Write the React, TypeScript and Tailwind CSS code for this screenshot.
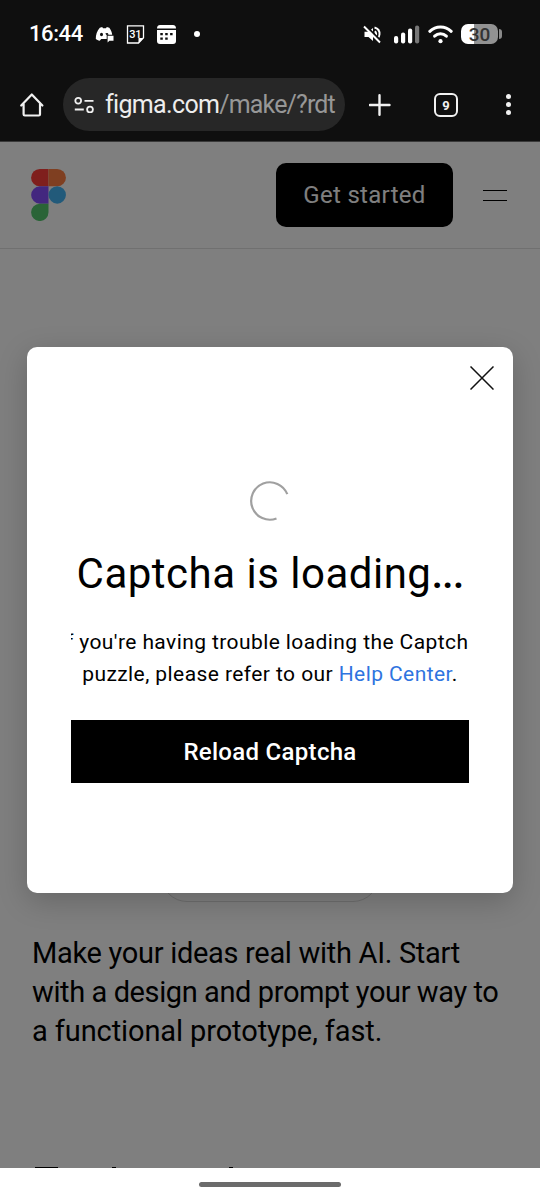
import React from 'react';

const StatusBar = () => {
  return (
    <div className="flex h-[70px] items-center pr-[38px] pb-[2px] pl-[29px] text-white">
      <span className="w-[66px] text-[22px] leading-none font-medium tracking-[-0.4px]">16:44</span>
      <svg className="h-5 w-[19px]" viewBox="0 0 19 20" fill="currentColor">
        <path d="M4.800 3.800 7.200 3 8 4.200h3L11.800 3l2.500.8c1.700 2.300 2.700 4.600 2.900 7h-5.500v4.300l-2.300-.2H6.200l-1.400 1.800C3 16.400 1.800 15.800.8 15c-.1-4 1.200-8 4-11.200Z" />
        <ellipse cx="6.500" cy="10.500" rx="1.500" ry="1.700" fill="#0f0f0f" />
        <path d="M10.300 9.500c1.500-1.100 3-.7 3.200 1.200l-2 .4Z" fill="#0f0f0f" />
        <path d="M12.600 11.700h5.900v5h-4.100l-1.800 1.900Z" />
      </svg>
      <svg className="ml-3 h-[19px] w-[19px]" viewBox="0 0 19 19" fill="none">
        <path d="M1.500.8h16v12l-5 5.200h-11Z" stroke="currentColor" strokeWidth="1.300" />
        <path d="M12.500 18v-5h5Z" fill="currentColor" />
        <text x="9.300" y="13" textAnchor="middle" fontSize="11" fontWeight="500" letterSpacing="-0.300" fill="currentColor">31</text>
      </svg>
      <svg className="ml-3 h-[19px] w-[19px]" viewBox="0 0 19 19" fill="currentColor">
        <path d="M3 0h13q3 0 3 3.500H0Q0 0 3 0Z" />
        <path d="M0 5h19v11q0 3-3 3H3q-3 0-3-3Z" />
        <path d="M3.300 8h2.500v2.300H3.300zM8.200 8h2.500v2.300H8.200zM13.100 8h2.500v2.300h-2.500zM3.300 12.500h2.500v2.300H3.300zM8.200 12.500h2.500v2.300H8.200z" fill="#0f0f0f" />
      </svg>
      <span className="ml-[18px] h-[6px] w-[6px] rounded-full bg-white" />

      <div className="ml-auto flex items-center">
        <svg className="h-[19px] w-[19px]" viewBox="0 0 19 19" fill="none">
          <path d="M1.500 6.700h4L10 3v13l-4.500-4h-4Z" fill="currentColor" />
          <path d="M12 6.200q2.300 3 0 6M11.500 2.500q5.500 1.500 5 7-.2 2.500-2 4" stroke="currentColor" strokeWidth="1.900" />
          <path d="m2.500.5 16 16" stroke="#0f0f0f" strokeWidth="2" />
          <path d="m1 1.500 16 16" stroke="currentColor" strokeWidth="1.900" />
        </svg>
        <svg className="ml-3 h-[19px] w-[26px]" viewBox="0 0 26 19" fill="currentColor">
          <rect x="0" y="11" width="4.200" height="7.500" rx="2" />
          <rect x="7" y="7.500" width="4.200" height="11" rx="2" />
          <rect x="14" y="3.500" width="4.200" height="15" rx="2" />
          <rect x="21" y="0.500" width="4.200" height="18" rx="2" fill="#777" />
        </svg>
        <svg className="ml-2 h-[19px] w-[25px]" viewBox="0 0 25 19" fill="none" stroke="currentColor" strokeLinecap="round">
          <path d="M1.800 6.300c6-5.700 15.400-5.700 21.400 0" strokeWidth="3" />
          <path d="M6.600 11.100c3.300-3.100 8.500-3.100 11.800 0" strokeWidth="3" />
          <circle cx="12.500" cy="16.200" r="2.100" fill="currentColor" stroke="none" />
        </svg>
        <div className="ml-2 flex h-5 w-[37px] items-center justify-center rounded-[7px] bg-linear-to-r from-white from-34% to-[#929292] to-34% text-[19px] leading-none font-medium text-[#333]">
          30
        </div>
        <div className="ml-px h-[10px] w-[3px] rounded-r-full bg-[#8a8a8a]" />
      </div>
    </div>
  );
};

const AddressBar = () => {
  return (
    <div className="flex h-[72px] items-start border-b border-[#3a3a3a] pt-2 pl-[19px] text-[#f1f1f1]">
      <svg className="mt-[14px] h-[26px] w-[26px]" viewBox="0 0 26 26" fill="none" stroke="currentColor" strokeWidth="2.200" strokeLinejoin="round" strokeLinecap="round">
        <path d="M2.200 13.500 12.800 2.500l10.600 11M4.600 12v10.300q0 1.200 1.200 1.200h14q1.200 0 1.200-1.200V12" />
      </svg>
      <div className="ml-[18px] flex h-[53px] w-[282px] items-center rounded-full bg-[#272727] pl-[11px]">
        <svg className="h-4 w-5 shrink-0" viewBox="0 0 20 16" fill="none" stroke="currentColor" strokeWidth="1.800">
          <circle cx="4.200" cy="3.800" r="2.900" />
          <path d="M10.500 3.800h9M.8 12.500h9" />
          <circle cx="16" cy="12.500" r="2.900" />
        </svg>
        <span className="ml-[11px] text-[25px] leading-none tracking-[-0.66px] whitespace-nowrap text-[#ededed]">
          figma.com<span className="tracking-[-0.85px] text-[#979797]">/make/?rdt</span>
        </span>
      </div>
      <svg className="mt-4 ml-6 h-[22px] w-[22px]" viewBox="0 0 22 22" stroke="currentColor" strokeWidth="2.400" strokeLinecap="round">
        <path d="M10.500 1.200v19.600M.9 11h19.600" />
      </svg>
      <div className="mt-[15px] ml-[43px] flex h-6 w-6 items-center justify-center rounded-[6px] border-2 border-[#f1f1f1] text-[13px] leading-none font-bold">
        9
      </div>
      <div className="mt-4 ml-[48px] flex flex-col gap-[3px]">
        <span className="h-[5px] w-[5px] rounded-full bg-[#f1f1f1]" />
        <span className="h-[5px] w-[5px] rounded-full bg-[#f1f1f1]" />
        <span className="h-[5px] w-[5px] rounded-full bg-[#f1f1f1]" />
      </div>
    </div>
  );
};

const FigmaLogo = () => (
  <svg className="h-[52px] w-[35px]" viewBox="0 0 34.500 51.500">
    <path d="M8.600 0h8.650v17.200H8.600a8.600 8.600 0 0 1 0-17.200Z" fill="#ff3f3b" />
    <path d="M17.250 0h8.650a8.600 8.600 0 0 1 0 17.200h-8.650Z" fill="#ff7f43" />
    <path d="M8.600 17.200h8.650v17.100H8.600a8.550 8.550 0 0 1 0-17.100Z" fill="#874fff" />
    <circle cx="25.900" cy="25.700" r="8.600" fill="#44b5f5" />
    <path d="M8.600 34.300h8.650v8.600a8.620 8.620 0 1 1-8.650-8.600Z" fill="#55c96f" />
  </svg>
);

const Page = () => {
  return (
    <div className="h-full bg-white">
      <header className="flex h-[107px] items-center border-b border-[#e0e0e0] pl-[31px]">
        <FigmaLogo />
        <button className="ml-[210px] h-16 w-[177px] rounded-[10px] bg-black text-[24px] tracking-[0.3px] text-white">
          Get started
        </button>
        <div className="ml-[30px] h-[11px] w-[24px] border-y border-black" />
      </header>
      <div className="mx-auto mt-[600px] h-[53px] w-[218px] rounded-[26px] border border-[#dcdcdc]" />
      <p className="mt-8 ml-8 flex flex-col text-[29px] leading-[39px] whitespace-nowrap text-black">
        <span className="tracking-[-0.3px]">Make your ideas real with AI. Start</span>
        <span className="tracking-[-0.4px]">with a design and prompt your way to</span>
        <span className="tracking-[-0.1px]">a functional prototype, fast.</span>
      </p>
      {/* Top edges of the next section's heading */}
      <div className="mt-[116px] flex pl-[35px]">
        <span className="h-[2px] w-[23px] bg-black" />
        <span className="ml-[54px] h-[2px] w-[4px] bg-black" />
        <span className="ml-[113px] h-[2px] w-[4px] bg-black" />
      </div>
    </div>
  );
};

const CaptchaModal = () => {
  return (
    <div className="absolute top-[205px] left-[27px] h-[546px] w-[486px] rounded-[10px] bg-white px-[44px] shadow-[0_8px_30px_rgba(0,0,0,0.2)]">
      <svg className="absolute top-[19px] right-[19.5px] h-6 w-6" viewBox="0 0 24 24" stroke="#111" strokeWidth="1.500">
        <path d="m.5.5 23 23M23.500.5l-23 23" />
      </svg>
      <svg className="mx-auto mt-[133px] h-[42px] w-[42px]" viewBox="0 0 42 42" fill="none" stroke="#a0a0a0" strokeWidth="2.200">
        <path d="M38.300 14.200A18.700 18.700 0 1 0 27.500 38.500" />
      </svg>
      <h1 className="mt-[24px] text-center text-[42px] leading-[56px] tracking-[0.5px] whitespace-nowrap text-black">
        Captcha is loading<span className="font-medium tracking-[-1px]">...</span>
      </h1>
      <div className="mt-6 flex flex-col items-center overflow-hidden text-[21px] leading-8 whitespace-nowrap text-black">
        <span className="tracking-[0.41px]">If you're having trouble loading the Captcha</span>
        <span className="tracking-[0.42px]">
          puzzle, please refer to our <a className="text-[#2f74df]">Help Center</a>.
        </span>
      </div>
      <button className="mt-[30px] h-[63px] w-full bg-black text-[24px] font-medium tracking-[0.3px] text-white">
        Reload Captcha
      </button>
    </div>
  );
};

export default function App() {
  return (
    <div className="flex h-[1200px] w-[540px] flex-col overflow-hidden bg-[#0f0f0f] font-['Roboto',sans-serif]">
      <StatusBar />
      <AddressBar />
      <main className="relative h-[1026px] overflow-hidden">
        <Page />
        <div className="absolute inset-0 bg-black/50" />
        <CaptchaModal />
      </main>
      <div className="flex h-8 items-center justify-center bg-white">
        <div className="h-[5px] w-[142px] rounded-full bg-[#6b6b6b]" />
      </div>
    </div>
  );
}
